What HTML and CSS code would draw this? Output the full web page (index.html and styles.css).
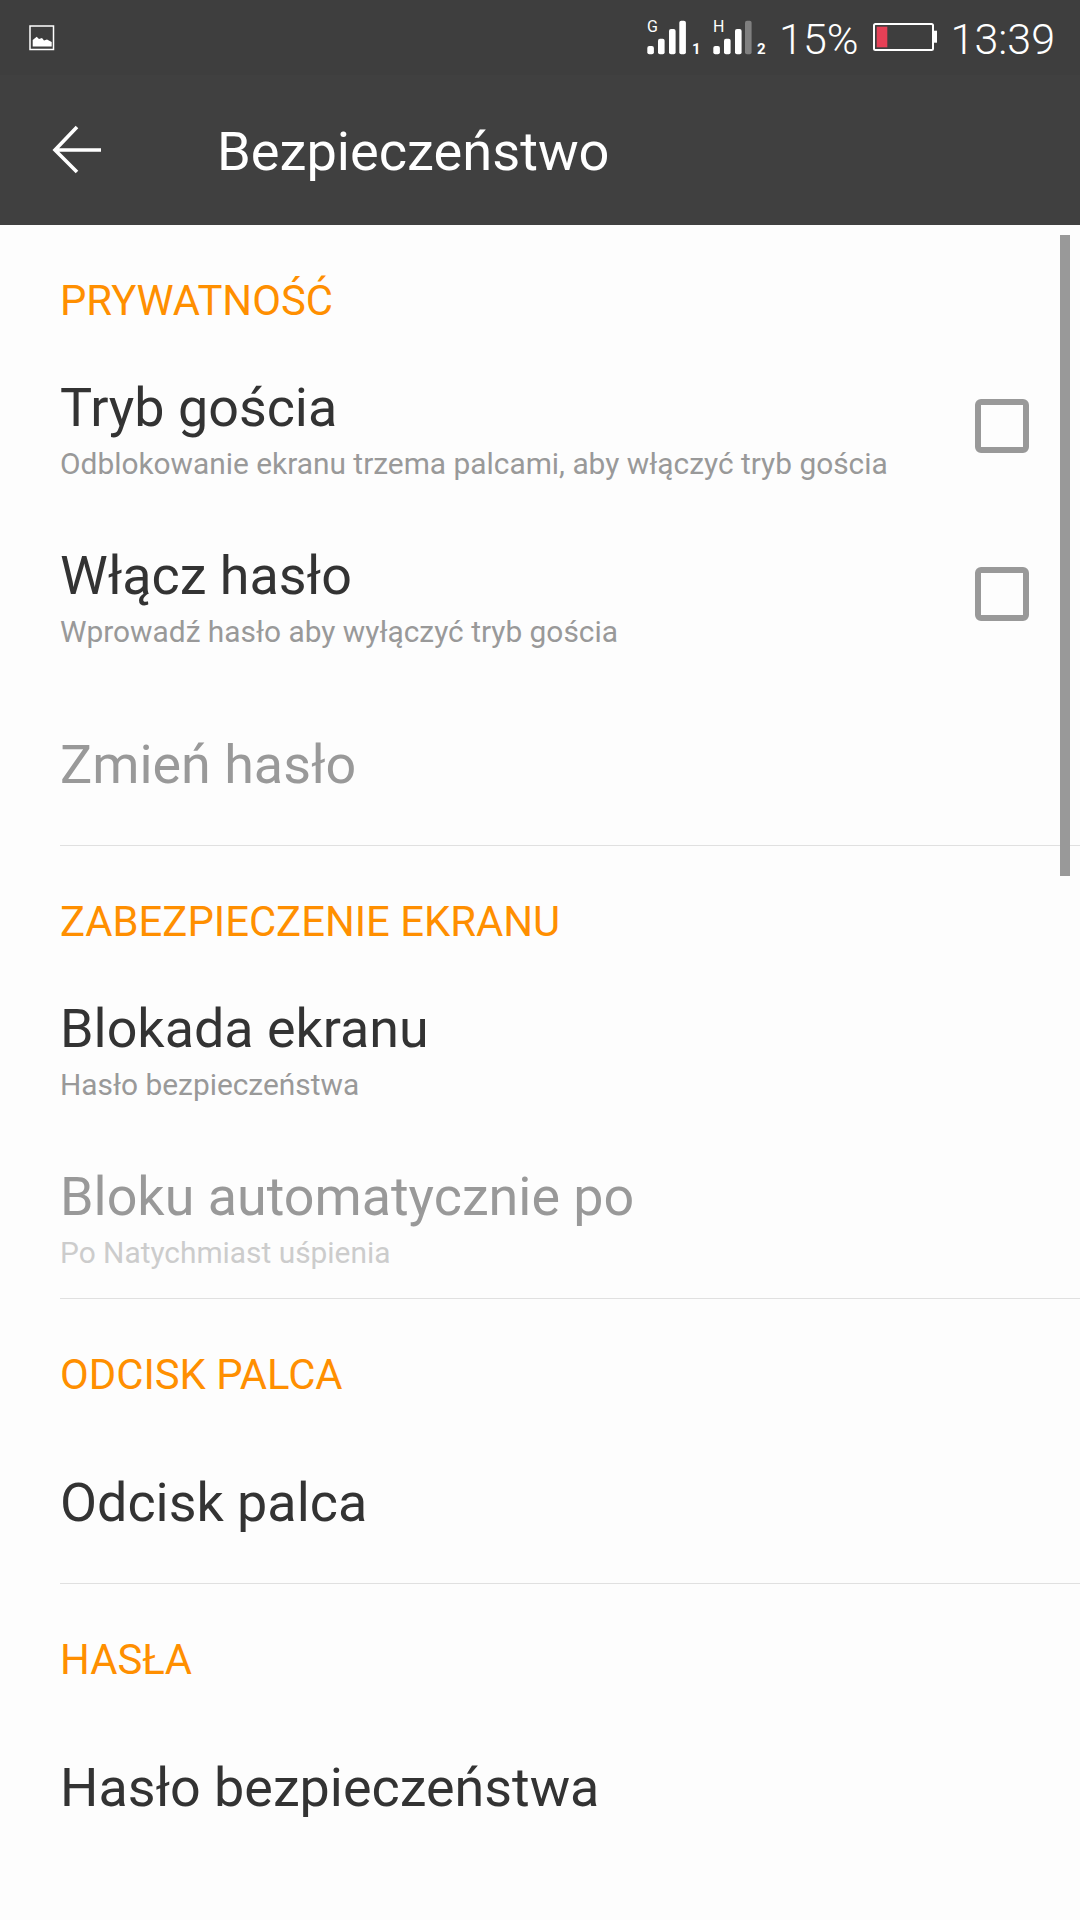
FILE: index.html
```html
<!DOCTYPE html>
<html lang="pl">
<head>
<meta charset="utf-8">
<title>Bezpieczeństwo</title>
<link rel="stylesheet" href="styles.css">
</head>
<body>
<div class="phone">
  <div class="status">
    <svg class="pic" width="26" height="26" viewBox="0 0 26 26"><rect x="1" y="1" width="23.500" height="23.500" fill="none" stroke="#fff" stroke-width="1.500"/><path d="M3.700 21.500V15l4-3.300 2.300 2.300 3-1 2 2.500 3-1 4.700 2.500v4.500z" fill="#fff"/></svg>
    <div class="status-right">
      <svg class="sig" width="66" height="75" viewBox="0 0 66 75"><text x="0" y="32" class="sig-l">G</text><rect x="0.300" y="46" width="6.600" height="8.300" rx="2" fill="#fff"/><rect x="11" y="38.700" width="6.600" height="15.600" rx="2" fill="#fff"/><rect x="22" y="29" width="6.600" height="25.300" rx="2" fill="#fff"/><rect x="32.300" y="20.700" width="6.600" height="33.600" rx="2" fill="#fff"/><text x="45" y="54.300" class="sig-n">1</text></svg>
      <svg class="sig" width="66" height="75" viewBox="0 0 66 75"><text x="0" y="32" class="sig-l">H</text><rect x="0.300" y="46" width="6.600" height="8.300" rx="2" fill="#fff"/><rect x="11" y="38.700" width="6.600" height="15.600" rx="2" fill="#fff"/><rect x="22" y="29" width="6.600" height="25.300" rx="2" fill="#fff"/><rect x="32" y="20.700" width="6.600" height="33.600" rx="2" fill="#808080"/><text x="44" y="54.300" class="sig-n">2</text></svg>
      <span class="pct">15%</span>
      <svg class="bat" width="64" height="75" viewBox="0 0 64 75"><rect x="1" y="24" width="59" height="26" rx="1.500" fill="none" stroke="#fff" stroke-width="2"/><rect x="3.700" y="26.700" width="10.600" height="20.600" fill="#e64056"/><rect x="60" y="30.700" width="4" height="12" fill="#fff"/></svg>
      <span class="time">13:39</span>
    </div>
  </div>
  <div class="appbar">
    <svg class="back" width="50" height="50" viewBox="0 0 50 50"><path d="M25 2 3 25l22 22M3 25h46" fill="none" stroke="#fff" stroke-width="3.600"/></svg>
    <span class="appbar-title">Bezpieczeństwo</span>
  </div>
  <div class="list">
    <section class="section divided">
      <h2 class="head">PRYWATNOŚĆ</h2>
      <div class="row two check"><div><div class="title">Tryb gościa</div><div class="sub">Odblokowanie ekranu trzema palcami, aby włączyć tryb gościa</div></div><span class="box"></span></div>
      <div class="row two check"><div><div class="title">Włącz hasło</div><div class="sub">Wprowadź hasło aby wyłączyć tryb gościa</div></div><span class="box"></span></div>
      <div class="row one off"><div class="title">Zmień hasło</div></div>
    </section>
    <section class="section divided">
      <h2 class="head">ZABEZPIECZENIE EKRANU</h2>
      <div class="row two"><div><div class="title">Blokada ekranu</div><div class="sub">Hasło bezpieczeństwa</div></div></div>
      <div class="row two last off"><div><div class="title">Bloku automatycznie po</div><div class="sub">Po Natychmiast uśpienia</div></div></div>
    </section>
    <section class="section divided">
      <h2 class="head">ODCISK PALCA</h2>
      <div class="row one"><div class="title">Odcisk palca</div></div>
    </section>
    <section class="section">
      <h2 class="head">HASŁA</h2>
      <div class="row one"><div class="title">Hasło bezpieczeństwa</div></div>
    </section>
    <div class="scrollbar"></div>
  </div>
</div>
</body>
</html>
```
FILE: styles.css
```css
* { box-sizing: border-box; }
html, body { margin: 0; padding: 0; }
body { font-family: Roboto, "Noto Sans", sans-serif; background: #fdfdfd; }
.phone { width: 1080px; height: 1920px; overflow: hidden; display: flex; flex-direction: column; }
.status { height: 75px; background: #3e3e3e; display: flex; align-items: center; justify-content: space-between; padding: 0 25px 0 29px; color: #fff; }
.status-right { display: flex; align-items: center; }
.pic { display: block; }
.sig { display: block; }
.sig-l { font-size: 16px; fill: #fff; font-family: Roboto, sans-serif; }
.sig-n { font-size: 15px; font-weight: 700; fill: #fff; font-family: Roboto, sans-serif; }
.pct { font-size: 43px; font-weight: 300; line-height: 1; margin-top: 3px; }
.bat { display: block; margin: 0 14px; }
.time { font-size: 43px; font-weight: 300; line-height: 1; margin-top: 3px; }
.appbar { height: 150px; background: #404040; display: flex; align-items: center; padding-left: 52px; color: #fff; }
.back { display: block; }
.appbar-title { font-size: 54.200px; font-weight: 400; margin-left: 115px; margin-top: 2px; }
.list { position: relative; flex: 1; padding-top: 25px; }
.section { padding-left: 60px; }
.divided .row:last-child { border-bottom: 1px solid #e0e0e0; }
.section + .section { padding-top: 25px; }
.head { margin: 0; height: 100px; display: flex; align-items: center; font-size: 41.800px; font-weight: 400; color: #ff8f00; }
.row { display: flex; justify-content: space-between; align-items: flex-start; }
.two { height: 168px; padding-top: 25px; }
.two.last { height: 160px; }
.one { height: 160px; align-items: center; padding-bottom: 2px; }
.title { font-size: 53.850px; line-height: 66px; color: #333; }
.sub { font-size: 29.870px; line-height: 44px; padding-top: 1px; color: #999; }
.off .title { color: #999; }
.off .sub { color: #ccc; }
.box { width: 54px; height: 54px; border: 6px solid #999; border-radius: 6px; margin: 24px 51px 0 0; flex: none; }
.scrollbar { position: absolute; top: 10px; right: 10px; width: 10px; height: 641px; background: #999; }
```
